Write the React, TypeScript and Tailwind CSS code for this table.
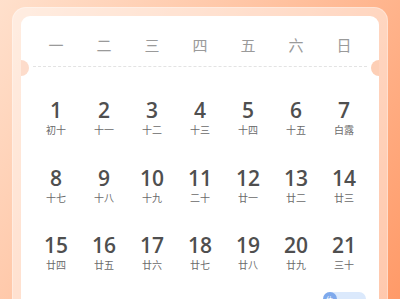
import React from 'react';

const weekdays = ['一', '二', '三', '四', '五', '六', '日'];

const days: { d: number; l: string }[] = [
  { d: 1, l: '初十' },
  { d: 2, l: '十一' },
  { d: 3, l: '十二' },
  { d: 4, l: '十三' },
  { d: 5, l: '十四' },
  { d: 6, l: '十五' },
  { d: 7, l: '白露' },
  { d: 8, l: '十七' },
  { d: 9, l: '十八' },
  { d: 10, l: '十九' },
  { d: 11, l: '二十' },
  { d: 12, l: '廿一' },
  { d: 13, l: '廿二' },
  { d: 14, l: '廿三' },
  { d: 15, l: '廿四' },
  { d: 16, l: '廿五' },
  { d: 17, l: '廿六' },
  { d: 18, l: '廿七' },
  { d: 19, l: '廿八' },
  { d: 20, l: '廿九' },
  { d: 21, l: '三十' },
];

export default function App() {
  return (
    <div className="w-[400px] h-[299px] overflow-hidden bg-[linear-gradient(125deg,#ffe0cc_0%,#ffc6a6_40%,#ff9a68_100%)] pt-[7px] px-[12px] font-['Noto_Sans_CJK_SC',sans-serif]">
      <div className="rounded-[14px] bg-white/45 border border-white/30 px-[8px] pt-[8px] h-[320px]">
        <div className="relative overflow-hidden rounded-[9px] bg-white h-[320px] px-[11px]">
          {/* ticket notches */}
          <div className="absolute left-[-8px] top-[44px] w-[16px] h-[16px] rounded-full bg-[#fddccb]" />
          <div className="absolute right-[-8px] top-[44px] w-[16px] h-[16px] rounded-full bg-[#fdcfb6]" />

          <div className="grid grid-cols-7 pt-[20px] pb-[12px] text-[15px] leading-[18px] text-[#9a9a9a]">
            {weekdays.map((w) => (
              <div key={w} className="text-center">{w}</div>
            ))}
          </div>
          <div className="border-t border-dashed border-[#e3e3e3] mx-[1px]" />

          <div className="grid grid-cols-7 pt-[30px]">
            {days.map((x) => (
              <div key={x.d} className="h-[67.5px] flex flex-col items-center">
                <span className="text-[21px] leading-[26px] font-semibold text-[#4f4f4f] font-['Open_Sans',sans-serif]">{x.d}</span>
                <span className="text-[10px] leading-[13px] text-[#6a6a6a]">{x.l}</span>
              </div>
            ))}
            <div className="col-start-7 flex justify-center mt-[-8px]">
              <div className="w-[43px] h-[14px] rounded-full bg-[#dbe9fc] flex items-center">
                <span className="w-[14px] h-[14px] rounded-full bg-[#7ea9ec] text-white text-[7px] leading-[14px] text-center">休</span>
              </div>
            </div>
          </div>
        </div>
      </div>
    </div>
  );
}
